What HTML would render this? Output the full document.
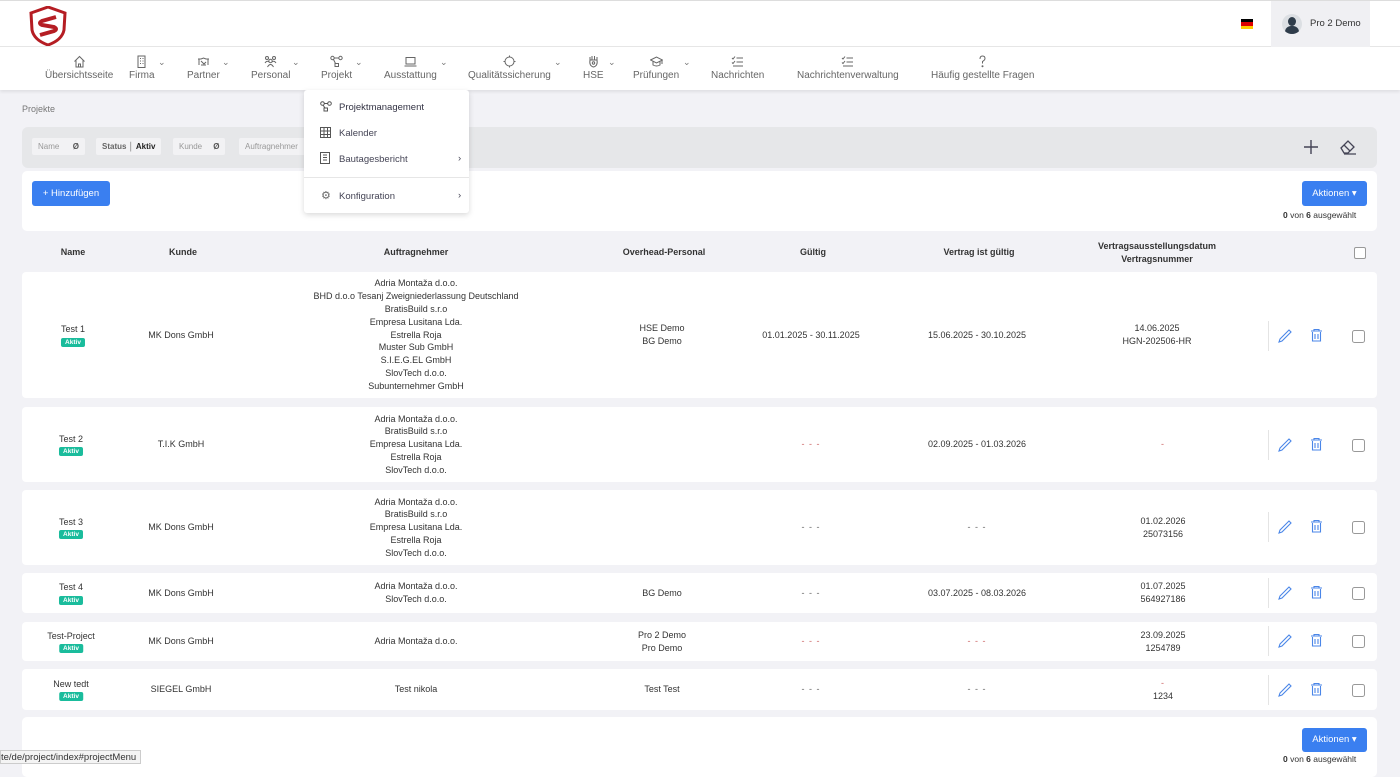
<!DOCTYPE html>
<html><head><meta charset="utf-8"><style>
*{box-sizing:border-box;margin:0;padding:0}
body{width:1400px;height:764px;overflow:hidden;background:#f2f2f6;font-family:"Liberation Sans",sans-serif;color:#333;font-size:9.5px;position:relative}
.abs{position:absolute}
.hdr{left:0;top:0;width:1400px;height:47px;background:#fff;border-top:1px solid #ddd;border-bottom:1px solid #e6e6e6}
.nav{left:0;top:47px;width:1400px;height:43px;background:#fff;box-shadow:0 2px 3px rgba(0,0,0,.08)}
.ni{position:absolute;top:8px;text-align:center;color:#666;font-size:10px;line-height:12px}
.ni svg{display:block;margin:0 auto 2px;width:13px;height:13px}
.car{position:absolute;top:10px;color:#777;font-size:9px}
.filter{left:22px;top:127px;width:1355px;height:41px;background:#e6e7e9;border-radius:6px}
.chip{position:absolute;top:11px;height:17px;background:#f2f2f4;border-radius:2px;font-size:8px;color:#999;line-height:17px;padding:0 6px}
.card{background:#fff;border-radius:5px}
.btn{background:#3a7ff0;color:#fff;border-radius:3px;font-size:9.5px;text-align:center}
.row{position:absolute;left:22px;width:1355px;background:#fff;border-radius:4px}
.c{position:absolute;top:0;height:100%;display:flex;flex-direction:column;justify-content:center;align-items:center;text-align:center;line-height:12.8px;font-size:9px;color:#333;transform:translateX(-50%);white-space:nowrap}
.badge{background:#1abc9c;color:#fff;font-size:6.5px;font-weight:bold;padding:0 4px;border-radius:2px;line-height:9px;margin-top:2px}
.cb{position:absolute;width:12px;height:12px;border:1px solid #999;border-radius:2px;background:#fff}
.th{position:absolute;top:235px;height:35px;display:flex;flex-direction:column;justify-content:center;font-weight:bold;font-size:9px;color:#333;transform:translateX(-50%);text-align:center;line-height:13px;white-space:nowrap}
.dash{color:#c66;letter-spacing:1px}
.dd{left:304px;top:90px;width:165px;height:123px;background:#fff;border-radius:3px;box-shadow:0 2px 6px rgba(0,0,0,.15);font-size:9.5px;color:#445}
.dd div{position:absolute;left:35px}
svg.i *{fill:none;stroke:#666;stroke-width:1}
</style></head><body>
<div class="abs hdr">
 <svg class="abs" style="left:29px;top:5px" width="38" height="40" viewBox="0 0 38 40"><path d="M19 1 L36 7 L35 24 Q33 34 19 39 Q5 34 3 24 L2 7 Z" fill="none" stroke="#b51d23" stroke-width="3"/><path d="M27 11 L13 15 Q9 17 13 19 L25 21 Q29 23 25 25 L11 29" fill="none" stroke="#b51d23" stroke-width="4"/></svg>
 <div class="abs" style="left:1241px;top:18px;width:12px;height:10px"><div style="height:3.3px;background:#000"></div><div style="height:3.3px;background:#d00"></div><div style="height:3.4px;background:#fc0"></div></div>
 <div class="abs" style="left:1271px;top:0;width:99px;height:46px;background:#f0f0f3"></div>
 <div class="abs" style="left:1282px;top:13px;width:20px;height:20px;border-radius:50%;background:#dcdfe3;overflow:hidden"><div style="position:absolute;left:6px;top:3px;width:8px;height:9px;border-radius:50%;background:#2f3c4a"></div><div style="position:absolute;left:3px;top:12px;width:14px;height:10px;border-radius:6px 6px 0 0;background:#2f3c4a"></div></div>
 <div class="abs" style="left:1310px;top:17px;font-size:9.5px;color:#333">Pro 2 Demo</div>
</div>
<div class="abs nav">
 <div class="ni" style="left:45px"><svg class="i" viewBox="0 0 13 13"><path d="M1.5 6.5 L6.5 1.5 L11.5 6.5 M3 5.5 V12 H10 V5.5 M5.5 12 V9 H7.5 V12"/></svg>Übersichtsseite</div>
 <div class="ni" style="left:129px"><svg class="i" viewBox="0 0 13 13"><rect x="3" y="1" width="7" height="11.5"/><path d="M5 3.5H6M7.5 3.5H8.5M5 6H6M7.5 6H8.5M5 8.5H6M7.5 8.5H8.5"/></svg>Firma</div><span class="car" style="left:158px">⌄</span>
 <div class="ni" style="left:187px"><svg class="i" viewBox="0 0 13 13"><path d="M1 4 H4 L6.5 3 L9 4 H12 M2 4 V10 M11 4 V10 M4 6 L7 9 L9 7 M4 10 H9"/></svg>Partner</div><span class="car" style="left:222px">⌄</span>
 <div class="ni" style="left:251px"><svg class="i" viewBox="0 0 13 13"><circle cx="3" cy="3" r="1.5"/><circle cx="10" cy="3" r="1.5"/><circle cx="6.5" cy="6" r="1.7"/><path d="M1 8 Q3 5 5 7 M12 8 Q10 5 8 7 M3.5 12 Q6.5 7 9.5 12"/></svg>Personal</div><span class="car" style="left:292px">⌄</span>
 <div class="ni" style="left:321px"><svg class="i" viewBox="0 0 13 13"><circle cx="2.5" cy="3" r="1.7"/><circle cx="10.5" cy="3" r="1.7"/><rect x="5" y="8.5" width="3.5" height="3"/><path d="M4.2 3H8.8M3.5 4.5L5.5 8.5"/></svg>Projekt</div><span class="car" style="left:355px">⌄</span>
 <div class="ni" style="left:384px"><svg class="i" viewBox="0 0 13 13"><rect x="2" y="2.5" width="9" height="6.5"/><path d="M0.5 11H12.5"/></svg>Ausstattung</div><span class="car" style="left:440px">⌄</span>
 <div class="ni" style="left:468px"><svg class="i" viewBox="0 0 13 13"><circle cx="6.5" cy="6.5" r="4.5"/><path d="M6.5 0.5V2M6.5 11V12.5M0.5 6.5H2M11 6.5H12.5"/></svg>Qualitätssicherung</div><span class="car" style="left:554px">⌄</span>
 <div class="ni" style="left:583px"><svg class="i" viewBox="0 0 13 13"><path d="M3 5 V2 M5 4.5 V1 M7.5 4.5 V1 M10 5 V2 M3 5 Q2 11 6.5 12 Q11 11 10 5 Z"/><circle cx="6.5" cy="8" r="1.2"/></svg>HSE</div><span class="car" style="left:608px">⌄</span>
 <div class="ni" style="left:633px"><svg class="i" viewBox="0 0 13 13"><path d="M0.5 5 L6.5 2 L12.5 5 L6.5 8 Z M3 6.5 V10 Q6.5 12 10 10 V6.5 M12 5 V9"/></svg>Prüfungen</div><span class="car" style="left:683px">⌄</span>
 <div class="ni" style="left:711px"><svg class="i" viewBox="0 0 13 13"><path d="M1 3 L2 4 L4 1.5 M1 7.5 L2 8.5 L4 6 M5.5 3H12M5.5 7H12M2 11H12"/></svg>Nachrichten</div>
 <div class="ni" style="left:797px"><svg class="i" viewBox="0 0 13 13"><path d="M1 3 L2 4 L4 1.5 M1 7.5 L2 8.5 L4 6 M5.5 3H12M5.5 7H12M2 11H12"/></svg>Nachrichtenverwaltung</div>
 <div class="ni" style="left:931px"><svg class="i" viewBox="0 0 13 13"><path d="M4 4 Q4 1 6.5 1 Q9 1 9 3.5 Q9 5 6.5 6.5 V8.5"/><circle cx="6.5" cy="11.3" r=".5"/></svg>Häufig gestellte Fragen</div>
</div>
<div class="abs" style="left:22px;top:104px;font-size:9px;color:#777">Projekte</div>
<div class="abs filter">
 <div class="chip" style="left:10px">Name &nbsp;&nbsp;&nbsp;&nbsp;&nbsp;<b style="color:#555">Ø</b></div>
 <div class="chip" style="left:74px;color:#666"><b>Status</b> │ <b style="color:#222">Aktiv</b></div>
 <div class="chip" style="left:151px">Kunde &nbsp;&nbsp;&nbsp;&nbsp;<b style="color:#555">Ø</b></div>
 <div class="chip" style="left:217px;width:90px">Auftragnehmer</div>
 <svg style="position:absolute;left:1281px;top:12px" width="16" height="16"><path d="M8 1V15M1 8H15" stroke="#445" stroke-width="1.4"/></svg>
 <svg style="position:absolute;left:1317px;top:11px" width="18" height="17" viewBox="0 0 18 17"><path d="M2 10 L9 3 L15 9 L9 15 L5 15 Z M5 7 L11 13 M5 16 H17" fill="none" stroke="#445" stroke-width="1.3"/></svg>
</div>
<div class="abs card" style="left:22px;top:171px;width:1355px;height:60px"></div>
<div class="abs btn" style="left:32px;top:181px;width:78px;height:25px;line-height:25px">+ Hinzufügen</div>
<div class="abs btn" style="left:1302px;top:181px;width:65px;height:25px;line-height:25px">Aktionen ▾</div>
<div class="abs" style="left:1283px;top:210px;font-size:8.5px;color:#333"><b>0</b> von <b>6</b> ausgewählt</div>

<div class="th" style="left:73px">Name</div>
<div class="th" style="left:183px">Kunde</div>
<div class="th" style="left:416px">Auftragnehmer</div>
<div class="th" style="left:664px">Overhead-Personal</div>
<div class="th" style="left:813px">Gültig</div>
<div class="th" style="left:979px">Vertrag ist gültig</div>
<div class="th" style="left:1157px">Vertragsausstellungsdatum<br>Vertragsnummer</div>
<div class="cb" style="left:1354px;top:247px"></div>

<div class="row" style="top:272px;height:126px">
 <div class="c" style="left:51px">Test 1<span class="badge">Aktiv</span></div>
 <div class="c" style="left:159px">MK Dons GmbH</div>
 <div class="c" style="left:394px">Adria Montaža d.o.o.<br>BHD d.o.o Tesanj Zweigniederlassung Deutschland<br>BratisBuild s.r.o<br>Empresa Lusitana Lda.<br>Estrella Roja<br>Muster Sub GmbH<br>S.I.E.G.EL GmbH<br>SlovTech d.o.o.<br>Subunternehmer GmbH</div>
 <div class="c" style="left:640px">HSE Demo<br>BG Demo</div>
 <div class="c" style="left:789px">01.01.2025 - 30.11.2025</div>
 <div class="c" style="left:955px">15.06.2025 - 30.10.2025</div>
 <div class="c" style="left:1135px">14.06.2025<br>HGN-202506-HR</div>
</div>
<div class="row" style="top:407px;height:75px">
 <div class="c" style="left:49px">Test 2<span class="badge">Aktiv</span></div>
 <div class="c" style="left:159px">T.I.K GmbH</div>
 <div class="c" style="left:394px">Adria Montaža d.o.o.<br>BratisBuild s.r.o<br>Empresa Lusitana Lda.<br>Estrella Roja<br>SlovTech d.o.o.</div>
 <div class="c dash" style="left:789px">- - -</div>
 <div class="c" style="left:955px">02.09.2025 - 01.03.2026</div>
 <div class="c dash" style="left:1141px">-</div>
</div>
<div class="row" style="top:490px;height:75px">
 <div class="c" style="left:49px">Test 3<span class="badge">Aktiv</span></div>
 <div class="c" style="left:159px">MK Dons GmbH</div>
 <div class="c" style="left:394px">Adria Montaža d.o.o.<br>BratisBuild s.r.o<br>Empresa Lusitana Lda.<br>Estrella Roja<br>SlovTech d.o.o.</div>
 <div class="c dash" style="left:789px;color:#666">- - -</div>
 <div class="c dash" style="left:955px;color:#666">- - -</div>
 <div class="c" style="left:1141px">01.02.2026<br>25073156</div>
</div>
<div class="row" style="top:573px;height:40px">
 <div class="c" style="left:49px">Test 4<span class="badge">Aktiv</span></div>
 <div class="c" style="left:159px">MK Dons GmbH</div>
 <div class="c" style="left:394px">Adria Montaža d.o.o.<br>SlovTech d.o.o.</div>
 <div class="c" style="left:640px">BG Demo</div>
 <div class="c dash" style="left:789px;color:#666">- - -</div>
 <div class="c" style="left:955px">03.07.2025 - 08.03.2026</div>
 <div class="c" style="left:1141px">01.07.2025<br>564927186</div>
</div>
<div class="row" style="top:622px;height:39px">
 <div class="c" style="left:49px">Test-Project<span class="badge">Aktiv</span></div>
 <div class="c" style="left:159px">MK Dons GmbH</div>
 <div class="c" style="left:394px">Adria Montaža d.o.o.</div>
 <div class="c" style="left:640px">Pro 2 Demo<br>Pro Demo</div>
 <div class="c dash" style="left:789px">- - -</div>
 <div class="c dash" style="left:955px">- - -</div>
 <div class="c" style="left:1141px">23.09.2025<br>1254789</div>
</div>
<div class="row" style="top:669px;height:41px">
 <div class="c" style="left:49px">New tedt<span class="badge">Aktiv</span></div>
 <div class="c" style="left:159px">SIEGEL GmbH</div>
 <div class="c" style="left:394px">Test nikola</div>
 <div class="c" style="left:640px">Test Test</div>
 <div class="c dash" style="left:789px;color:#666">- - -</div>
 <div class="c dash" style="left:955px;color:#666">- - -</div>
 <div class="c" style="left:1141px"><span class="dash">-</span>1234</div>
</div>

<div class="abs" style="left:1268px;top:321px;width:1px;height:30px;background:#e4e4e4"></div>
<div class="abs" style="left:1268px;top:430px;width:1px;height:30px;background:#e4e4e4"></div>
<div class="abs" style="left:1268px;top:512px;width:1px;height:30px;background:#e4e4e4"></div>
<div class="abs" style="left:1268px;top:578px;width:1px;height:30px;background:#e4e4e4"></div>
<div class="abs" style="left:1268px;top:626px;width:1px;height:30px;background:#e4e4e4"></div>
<div class="abs" style="left:1268px;top:675px;width:1px;height:30px;background:#e4e4e4"></div>
<svg class="abs" style="left:0;top:0" width="1400" height="764">
<defs><g id="a"><path d="M1280 11 L1289 2 L1291 4 L1282 13 L1279 14 Z" fill="none" stroke="#4a86e8" stroke-width="1.1"/><path d="M1311 3 H1322 M1314 3 V1.5 H1319 V3 M1312.5 4 V13 H1320.5 V4 M1315 6 V11 M1318 6 V11" fill="none" stroke="#4a86e8" stroke-width="1.1"/><rect x="1352.5" y="2.5" width="12" height="12" rx="2" fill="#fff" stroke="#999"/></g></defs>
<use href="#a" y="328"/><use href="#a" y="437"/><use href="#a" y="519"/><use href="#a" y="585"/><use href="#a" y="633"/><use href="#a" y="682"/>
</svg>

<div class="abs card" style="left:22px;top:717px;width:1355px;height:60px"></div>
<div class="abs btn" style="left:1302px;top:728px;width:65px;height:24px;line-height:24px">Aktionen ▾</div>
<div class="abs" style="left:1283px;top:754px;font-size:8.5px;color:#333"><b>0</b> von <b>6</b> ausgewählt</div>
<div class="abs" style="left:0;top:750px;height:14px;padding:0 4px 0 0;background:#f4f4f4;border:1px solid #ccc;font-size:9.5px;color:#333;line-height:13px">te/de/project/index#projectMenu</div>

<div class="abs dd">
 <svg style="position:absolute;left:16px;top:11px" width="12" height="11" viewBox="0 0 12 11"><circle cx="2.5" cy="2.5" r="1.8" fill="none" stroke="#555"/><circle cx="9.5" cy="2.5" r="1.8" fill="none" stroke="#555"/><rect x="4" y="7" width="3.5" height="3" fill="none" stroke="#555"/><path d="M4.3 2.5H7.7M3 4l2 3" stroke="#555" fill="none"/></svg>
 <div style="top:12px;color:#334">Projektmanagement</div>
 <svg style="position:absolute;left:16px;top:37px" width="11" height="11"><rect x=".5" y=".5" width="10" height="10" fill="none" stroke="#555"/><path d="M0 4H11M0 7.5H11M4 0V11M7.5 0V11" stroke="#555"/></svg>
 <div style="top:38px">Kalender</div>
 <svg style="position:absolute;left:16px;top:62px" width="10" height="12"><rect x=".5" y=".5" width="9" height="11" fill="none" stroke="#555"/><path d="M3 3H7M3 5.5H7M3 8H7" stroke="#555"/></svg>
 <div style="top:64px">Bautagesbericht</div><span style="position:absolute;left:154px;top:63px">›</span>
 <div style="left:0;top:87px;width:165px;height:1px;background:#e6e6e6"></div>
 <div style="left:17px;top:99px;font-size:11px;color:#666">⚙</div>
 <div style="top:101px">Konfiguration</div><span style="position:absolute;left:154px;top:100px">›</span>
</div>
</body></html>
